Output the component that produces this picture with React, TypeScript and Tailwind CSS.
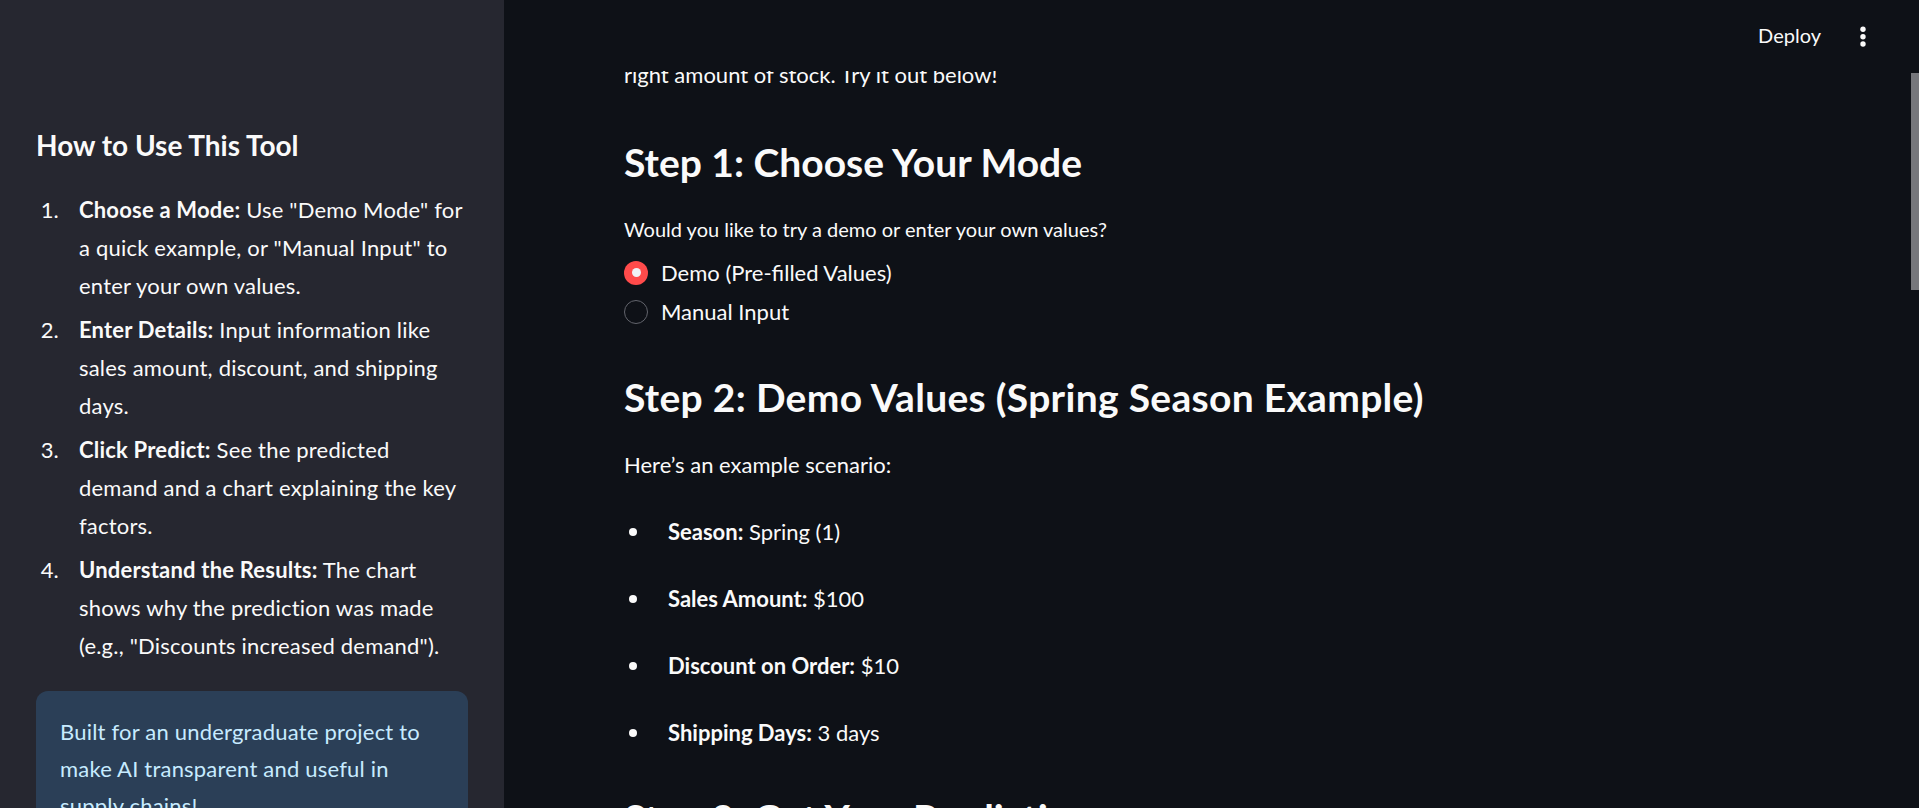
import React from "react";

const steps: { bold: string; lines: string[] }[] = [
  { bold: "Choose a Mode:", lines: [' Use "Demo Mode" for', 'a quick example, or "Manual Input" to', "enter your own values."] },
  { bold: "Enter Details:", lines: [" Input information like", "sales amount, discount, and shipping", "days."] },
  { bold: "Click Predict:", lines: [" See the predicted", "demand and a chart explaining the key", "factors."] },
  { bold: "Understand the Results:", lines: [" The chart", "shows why the prediction was made", '(e.g., "Discounts increased demand").'] },
];

const bullets: { bold: string; text: string }[] = [
  { bold: "Season:", text: " Spring (1)" },
  { bold: "Sales Amount:", text: " $100" },
  { bold: "Discount on Order:", text: " $10" },
  { bold: "Shipping Days:", text: " 3 days" },
];

export default function App() {
  return (
    <div className="flex h-[808px] w-full overflow-hidden text-[#fafafa] [font-family:Lato,'Noto_Sans',sans-serif]">
      <aside className="h-full w-[504px] shrink-0 overflow-hidden bg-[#262730] px-[36px] pt-[125px]">
        <h3 className="text-[28px] font-bold leading-[40px]">How to Use This Tool</h3>
        <ol className="mt-[26px] flex flex-col gap-[6px] text-[22px] leading-[38px] tracking-[0.2px]">
          {steps.map((s, i) => (
            <li key={i} className="flex">
              <span className="w-[43px] shrink-0 pr-[20px] text-right">{i + 1}.</span>
              <div className="whitespace-nowrap">
                <span className="font-bold">{s.bold}</span>
                {s.lines[0]}
                <br />
                {s.lines[1]}
                <br />
                {s.lines[2]}
              </div>
            </li>
          ))}
        </ol>
        <div className="mt-[26px] rounded-[12px] bg-[#2b3f57] px-[24px] pb-[24px] pt-[22px] text-[22px] leading-[37px] tracking-[0.2px] text-[#c7ebff]">
          Built for an undergraduate project to
          <br />
          make AI transparent and useful in
          <br />
          supply chains!
        </div>
      </aside>

      <main className="relative h-full flex-1 overflow-hidden bg-[#0e1117]">
        <div className="pl-[120px] pt-[55.5px]">
          <p className="text-[22px] leading-[38px]">right amount of stock. Try it out below!</p>
          <h3 className="mt-[44.5px] text-[39px] font-bold leading-[48px]">Step 1: Choose Your Mode</h3>
          <p className="mt-[28px] text-[20px] leading-[30px]">Would you like to try a demo or enter your own values?</p>
          <div className="mt-[9px] flex flex-col">
            <label className="flex h-[39px] items-center gap-[13px] text-[22px]">
              <span className="flex h-[24px] w-[24px] items-center justify-center rounded-full bg-[#ff4b4b]">
                <span className="h-[9px] w-[9px] rounded-full bg-[#f0f2f6]" />
              </span>
              <span className="leading-[39px]">Demo (Pre-filled Values)</span>
            </label>
            <label className="flex h-[39px] items-center gap-[13px] text-[22px]">
              <span className="h-[24px] w-[24px] rounded-full border-[1.5px] border-[#62646c]" />
              <span className="leading-[39px]">Manual Input</span>
            </label>
          </div>
          <h3 className="mt-[42px] text-[39px] font-bold leading-[48px] tracking-[0.3px]">Step 2: Demo Values (Spring Season Example)</h3>
          <p className="mt-[24.5px] text-[22px] leading-[38px]">Here’s an example scenario:</p>
          <ul className="mt-[29px] flex flex-col gap-[29px] text-[22px] leading-[38px]">
            {bullets.map((b, i) => (
              <li key={i} className="flex items-center">
                <span className="flex w-[44px] shrink-0 items-center">
                  <span className="ml-[5px] h-[8px] w-[8px] rounded-full bg-[#fafafa]" />
                </span>
                <span>
                  <span className="font-bold">{b.bold}</span>
                  {b.text}
                </span>
              </li>
            ))}
          </ul>
          <h3 className="mt-[42px] text-[39px] font-bold leading-[48px]">Step 3: Get Your Prediction</h3>
        </div>

        <header className="absolute left-0 right-0 top-0 flex h-[71px] items-start justify-end bg-[#0e1117] pr-[53px]">
          <span className="mt-[20px] text-[20px] leading-[30px]">Deploy</span>
          <svg className="ml-[39px] mt-[24px]" width="6" height="26" viewBox="0 0 6 26">
            <circle cx="3" cy="5.3" r="2.7" fill="#fafafa" />
            <circle cx="3" cy="12.7" r="2.7" fill="#fafafa" />
            <circle cx="3" cy="20" r="2.7" fill="#fafafa" />
          </svg>
        </header>
        <div className="absolute right-0 top-[73px] h-[217px] w-[8px] bg-[#76777c]" />
      </main>
    </div>
  );
}
